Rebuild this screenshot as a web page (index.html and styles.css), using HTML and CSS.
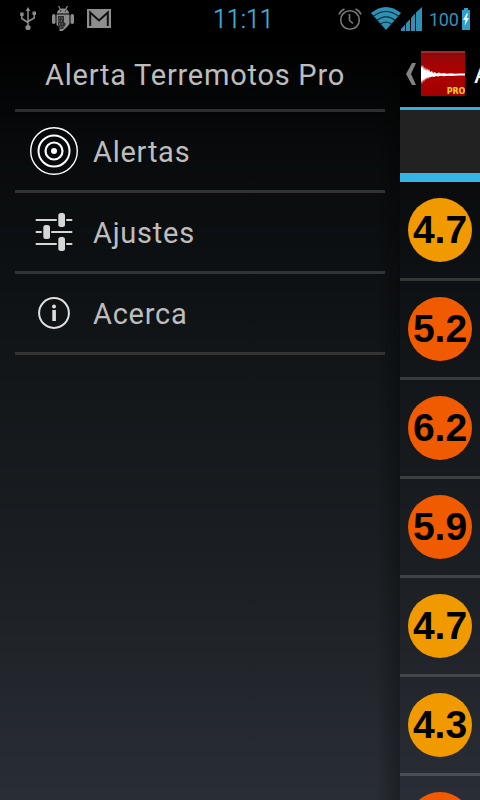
FILE: index.html
```html
<!DOCTYPE html>
<html lang="es">
<head>
<meta charset="utf-8">
<title>Alerta Terremotos Pro</title>
<link rel="stylesheet" href="styles.css">
</head>
<body>
<div class="screen">
  <header class="status">
    <div class="notifications">
      <svg class="usb" width="18" height="24" viewBox="0 0 18 24" fill="none" stroke="#8c8c8c" stroke-width="1.5"><path d="M9 3v17M2.800 8v3.500L9 15.500M15.200 7v4L9 14.500"/><path d="M9 0l2.300 4H6.700zM1.200 5.500h3.400V9H1.200zM13.500 4.500H17V8h-3.500z" fill="#8c8c8c" stroke="none"/><circle cx="9" cy="20.500" r="2.600" fill="#8c8c8c" stroke="none"/></svg>
      <svg class="droid" width="24" height="26" viewBox="0 0 24 26" fill="#8c8c8c"><path d="M6 7.500C6 4 9 2.500 12 2.500S18 4 18 7.500z"/><path d="M7.500 0l2 3.500M16.500 0l-2 3.500" stroke="#8c8c8c" stroke-width="1.200"/><rect x="1" y="8" width="3.500" height="10" rx="1.700"/><rect x="19.500" y="8" width="3.500" height="10" rx="1.700"/><path d="M5.500 8.500h13V18l-3 3.500-4 3.500h-3v-4l-3-2z"/><path d="M7 10h6v6l2 2-3 5H9l-2-4z" fill="#303030"/><path d="M8 12h5M7.500 15h5M8 18h5M9 21h4" stroke="#858585" stroke-width="1" stroke-dasharray="1 1.500"/><path d="M9 5h1.200M14 5h1.200" stroke="#111" stroke-width="1.200"/></svg>
      <svg class="mail" width="24" height="19" viewBox="0 0 24 19"><path fill="#8e8e8e" d="M0 0h24v19H0z"/><path d="M3.200 17V3.500L12 11.500l8.800-8V17" fill="none" stroke="#111" stroke-width="2"/></svg>
    </div>
    <div class="clock">11:11</div>
    <div class="system">
      <svg class="alarm" width="24" height="24" viewBox="0 0 24 24" fill="none" stroke="#777" stroke-width="1.600"><circle cx="12" cy="13" r="9.300"/><path d="M11.500 7v6.500l3.500 3M1 7.500Q2.500 3.500 6.500 2M23 7.500Q21.500 3.500 17.500 2"/></svg>
      <svg class="wifi" width="30" height="23" viewBox="0 0 30 23"><path fill="#2e91b4" d="M0 6Q15-6 30 6L15 23z"/><path d="M2 9.500Q15-.5 28 9.500M5.500 13.500Q15 6 24.500 13.500M9 17.500Q15 12.500 21 17.500" fill="none" stroke="#06202b" stroke-width="1.100"/></svg>
      <svg class="signal" width="21" height="24" viewBox="0 0 21 24" fill="#2e91b4"><path d="M0 24v-2l4-4.500V24zM5 24v-7.500l4-4.500v12zM10 24V11l4-4.500V24zM15 24V5.500L21 0v24z"/></svg>
      <span class="percent">100</span>
      <svg class="battery" width="8" height="22" viewBox="0 0 8 22"><path fill="#2e9fc9" d="M2 0h4v2h2v20H0V2h2z"/><path fill="#e5f5fb" d="M5 5L1 12h2.500L2.500 18 7 10H4.500L6 6z"/></svg>
    </div>
  </header>
  <div class="body">
    <nav class="menu">
      <h1 class="title">Alerta Terremotos Pro</h1>
      <div class="item">
        <svg class="icon" viewBox="0 0 48 48" fill="none" stroke="#fff"><circle cx="24" cy="24" r="23.300" stroke-width="1.400"/><circle cx="24" cy="24" r="15.500" stroke-width="2"/><circle cx="24" cy="24" r="8.500" stroke-width="2.200"/><circle cx="24" cy="24" r="3" fill="#fff" stroke="none"/></svg>
        <span class="label">Alertas</span>
      </div>
      <div class="item">
        <svg class="icon" viewBox="0 0 48 48" stroke="#d6d6d6" stroke-width="2" stroke-linecap="round"><path d="M6.500 12H26M37 12h4.500M6.500 24H11M22 24h19.500M6.500 36H26M37 36h4.500"/><g fill="#d6d6d6" stroke="none"><rect x="28.300" y="5" width="6.700" height="14" rx="2.500"/><rect x="13.300" y="17" width="6.700" height="14" rx="2.500"/><rect x="28.300" y="29" width="6.700" height="14" rx="2.500"/></g></svg>
        <span class="label">Ajustes</span>
      </div>
      <div class="item">
        <svg class="icon" viewBox="0 0 48 48"><circle cx="24" cy="24" r="14.900" fill="none" stroke="#dedede" stroke-width="2"/><circle cx="24" cy="17.500" r="2" fill="#dedede"/><path fill="#dedede" d="M22.300 21h3.600v11h-3.600z"/></svg>
        <span class="label">Acerca</span>
      </div>
    </nav>
    <main class="panel">
      <div class="actionbar">
        <svg class="back" width="10" height="22" viewBox="0 0 10 22"><path fill="#828282" d="M6 0h4L5 11l5 11H6L0 11z"/></svg>
        <svg class="logo" width="44" height="45" viewBox="0 0 44 45">
          <defs><linearGradient id="red" x2="0" y2="1"><stop stop-color="#8e0a0c"/><stop offset=".5" stop-color="#b00000"/><stop offset="1" stop-color="#a00000"/></linearGradient></defs>
          <path fill="url(#red)" d="M0 0h44v45H0z"/><path d="M0 1h44" stroke="#b14a4a"/>
          <path fill="#fff" d="M0 14l1 3 1-3 1 5 1-3 1 4 1-3 1 3 1-2 1 3 2-1 1 2 2-1 1 1.500 3-1 2 1 3-.5 3 .8 4-.5 4 .5 4-.4 6 .2v2l-6-.2-4 .4-4 .3-3-.3-4 .5-3-.5-3 .8-2-.6-2 1-2-.6-2 1-1-.5-1 2-1-2-1 3-1-2-1 4-1-3-1 5-1-4-1 3z"/>
          <text class="pro" x="44" y="43" text-anchor="end">PRO</text>
        </svg>
        <span class="heading">A</span>
      </div>
      <div class="tabs"></div>
      <div class="quake"><span class="mag amber">4.7</span></div>
      <div class="quake"><span class="mag orange">5.2</span></div>
      <div class="quake"><span class="mag orange">6.2</span></div>
      <div class="quake"><span class="mag orange">5.9</span></div>
      <div class="quake"><span class="mag amber">4.7</span></div>
      <div class="quake"><span class="mag amber">4.3</span></div>
      <div class="quake"><span class="mag orange"></span></div>
    </main>
  </div>
</div>
</body>
</html>
```

FILE: styles.css
```css
* { box-sizing: border-box; }
body { margin: 0; background: #000; font-family: Roboto, sans-serif; }
.screen {
  width: 480px; height: 800px; overflow: hidden;
  display: flex; flex-direction: column;
  background: linear-gradient(#000 0, #000 38px, #080a0b 150px, #111518 350px, #1b1f23 560px, #292d35 800px);
}
.status { height: 38px; flex: none; display: flex; align-items: center; position: relative; background: #000; }
.notifications { display: flex; align-items: center; margin-left: 19px; }
.usb { margin-top: -1px; }
.droid { margin-left: 14px; }
.mail { margin-left: 12px; margin-top: -1px; }
.clock { position: absolute; left: 213px; top: 5px; font-size: 25px; line-height: 30px; font-weight: 300; letter-spacing: 0; color: #3fb1dc; -webkit-text-stroke: .3px #3fb1dc; }
.system { margin-left: auto; display: flex; align-items: center; padding-right: 10px; }
.wifi { margin-left: 9px; margin-top: -1px; }
.signal { margin-left: 0; margin-top: -1px; }
.percent { width: 29px; margin: 1px 4px 0 7px; font-size: 18px; color: #3293b8; font-weight: 400; letter-spacing: -.3px; }
.battery { margin-top: -1px; }
.body { flex: 1; display: flex; min-height: 0; }
.menu {
  width: 400px; padding: 0 15px;
  background: linear-gradient(90deg, transparent 376px, rgba(0,0,0,.3) 400px);
}
.title { margin: 0; height: 74px; padding: 2px 0 0 30px; border-bottom: 3px solid #2d2e30; font-size: 29px; line-height: 70px; font-weight: 400; letter-spacing: .76px; color: #bdbdbd; white-space: nowrap; }
.item { height: 81px; display: flex; align-items: center; padding-left: 15px; border-bottom: 3px solid #323335; }
.icon { width: 48px; height: 48px; flex: none; }
.label { margin-left: 15px; font-size: 29px; letter-spacing: .75px; color: #bdbdbd; padding-top: 1px; }
.panel { width: 80px; overflow: hidden; }
.actionbar { height: 72px; border-bottom: 3px solid #3aabd9; background: #000; display: flex; align-items: center; padding-left: 6px; }
.back { flex: none; margin-top: 2px; }
.logo { flex: none; margin-left: 5px; margin-top: 2px; }
.pro { font: 700 8px "DejaVu Sans", sans-serif; letter-spacing: -.2px; fill: #ffd21c; }
.heading { margin-left: 9px; margin-top: 2px; font-size: 26px; color: #fff; }
.tabs { height: 72px; background: #222; border-bottom: 9px solid #35b5e5; }
.quake { height: 99px; padding: 16px 8px; border-bottom: 3px solid rgba(255,255,255,.16); }
.mag { width: 64px; height: 64px; border-radius: 50%; display: flex; align-items: center; justify-content: center; font: 700 39px "Liberation Sans", sans-serif; color: #000; }
.amber { background: #f09a00; }
.orange { background: #f05a00; }
```
